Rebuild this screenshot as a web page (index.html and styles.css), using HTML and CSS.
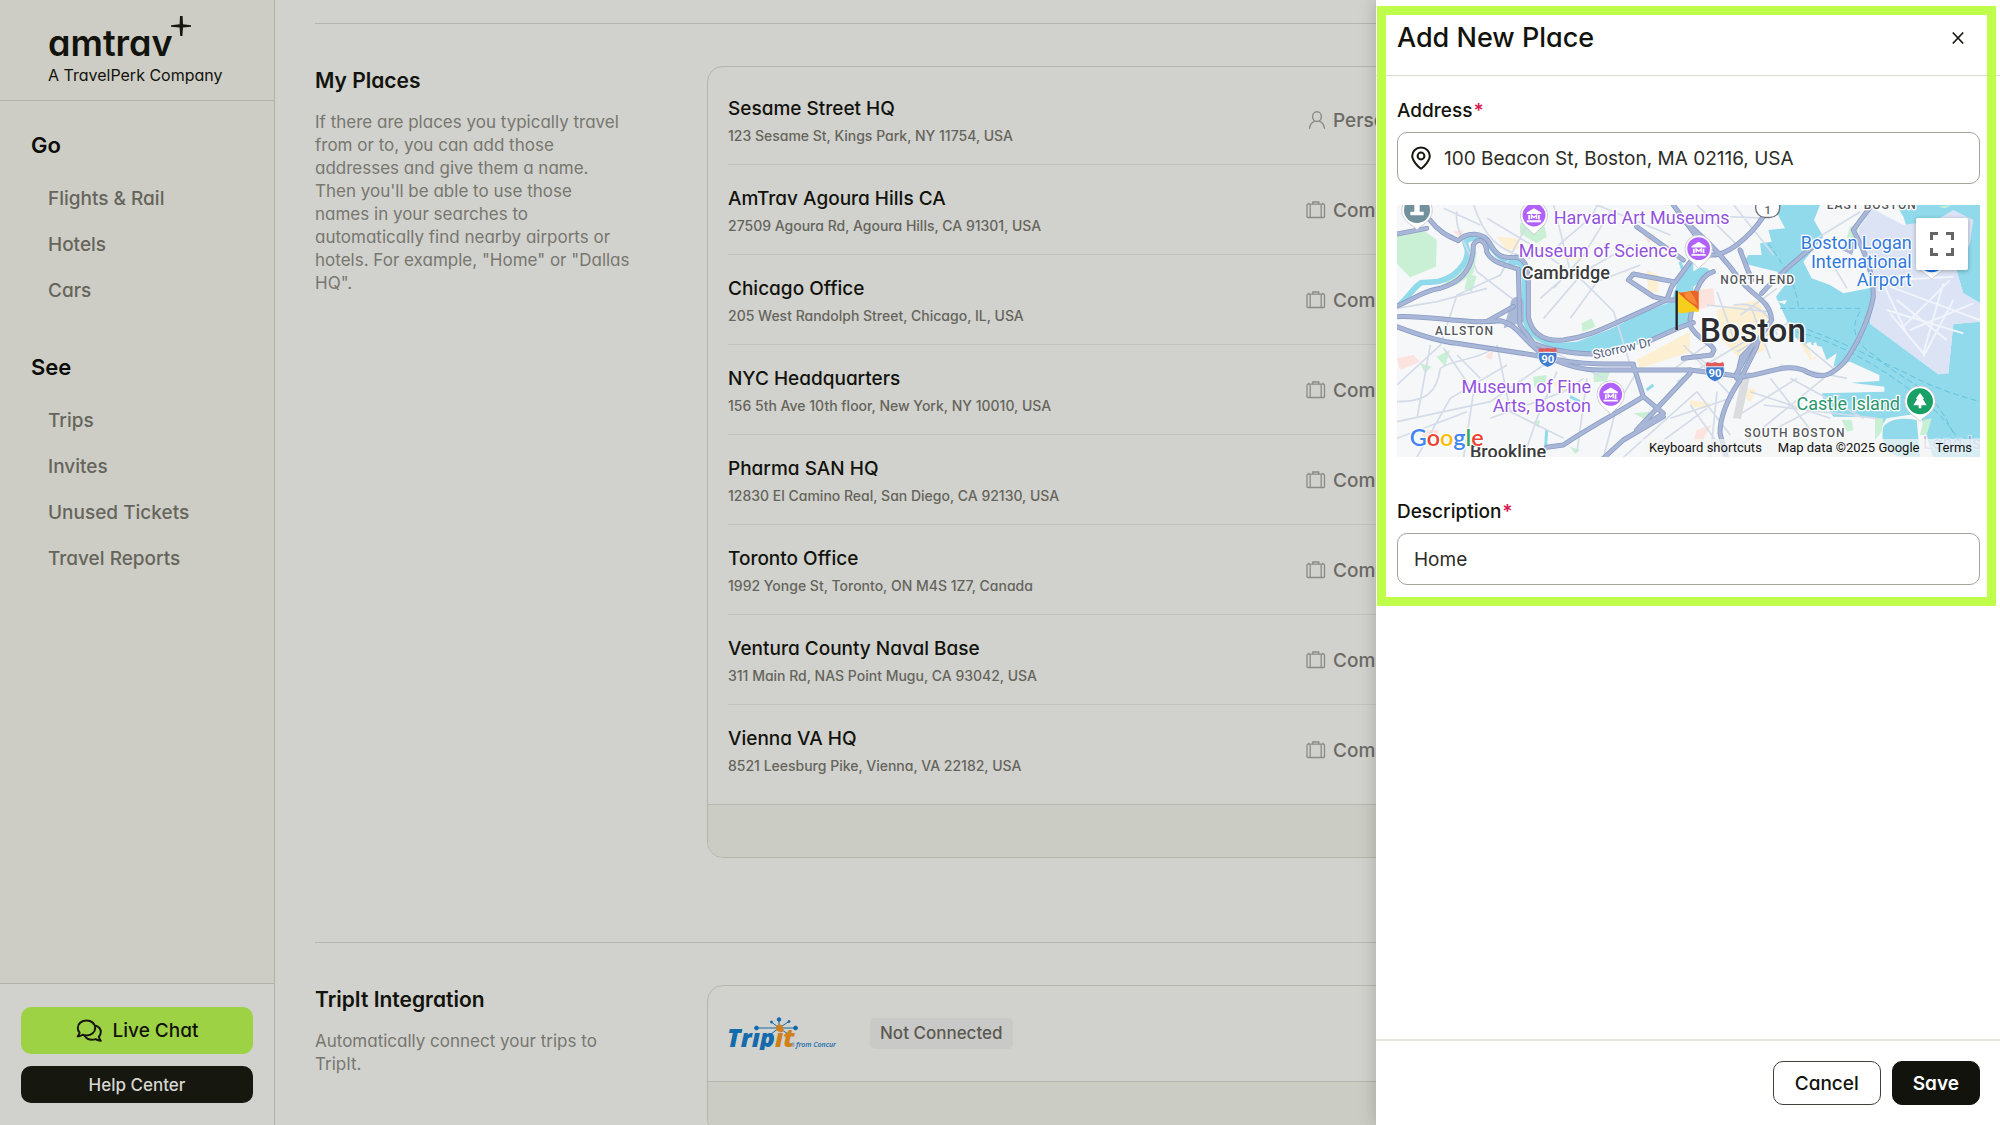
FILE: index.html
```html
<!DOCTYPE html>
<html lang="en">
<head>
<meta charset="utf-8">
<meta name="viewport" content="width=device-width, initial-scale=1">
<title>My Places - amtrav</title>
<link rel="stylesheet" href="styles.css">
</head>
<body>
<svg class="sprite" aria-hidden="true">
  <symbol id="suitcase" viewBox="0 0 20 18">
    <g fill="none" stroke="currentColor" stroke-width="1.3">
      <rect x="1" y="3.2" width="17.5" height="13.3" rx="1"/>
      <path d="M4.2 3.2v13.3M15.2 3.2v13.3M6.8 3.2V1h6v2.2M2.8 3V1.8M16.8 3V1.8"/>
    </g>
  </symbol>
  <symbol id="person" viewBox="0 0 20 18">
    <g fill="none" stroke="currentColor" stroke-width="1.4" stroke-linecap="round">
      <ellipse cx="11" cy="5.6" rx="4.4" ry="4.9"/>
      <path d="M3.6 17.2c.3-3.400 2-5.700 4.600-6.900M18.400 17.200c-.3-3.400-2-5.700-4.600-6.900"/>
    </g>
  </symbol>
  <symbol id="museum" viewBox="-40 -40 80 96">
    <path class="pin-base" d="M0 56C-8 42-38 32-38 0A38 38 0 0 1 38 0C38 32 8 42 0 56Z"/>
    <circle r="32" fill="#b161ff"/>
    <path d="M0-19-20-7v4h40v-4ZM-16 0h5v13h-5ZM11 0h5v13h-5ZM-20 15h40v5h-40Z" fill="#fff"/>
    <path d="M-7 11V1L0 7 7 1v10" fill="none" stroke="#fff" stroke-width="4"/>
  </symbol>
  <symbol id="interstate" viewBox="0 0 60 60">
    <path d="M4 16c-4 20 4 36 26 43 22-7 30-23 26-43Z" fill="#3d7bd0" stroke="#fff" stroke-width="2"/>
    <path d="M4 14c-1-4 0-8 3-12 7 4 15 3 23 0 8 3 16 4 23 0 3 4 4 8 3 12Z" fill="#e25a5a"/>
    <text x="30" y="46" text-anchor="middle" class="shield-text">90</text>
  </symbol>
</svg>

<div class="app">
  <aside class="sidebar">
    <header class="brand">
      <div class="brand-row">
        <span class="brand-name">amtrav</span>
        <svg class="brand-star" width="20" height="20" viewBox="0 0 20 20" aria-hidden="true"><path d="M9 0h2.600l.4 8.300 8 .9v1.600l-8 .7-.6 8.500H9.200l-.6-8.500-8.600-.7V9.200l8.600-.9Z" fill="#16170f"/></svg>
      </div>
      <p class="brand-sub">A TravelPerk Company</p>
    </header>
    <nav class="nav" aria-label="Main">
      <section>
        <h2 class="nav-title">Go</h2>
        <ul class="nav-list">
          <li><a href="#flights">Flights &amp; Rail</a></li>
          <li><a href="#hotels">Hotels</a></li>
          <li><a href="#cars">Cars</a></li>
        </ul>
      </section>
      <section>
        <h2 class="nav-title">See</h2>
        <ul class="nav-list">
          <li><a href="#trips">Trips</a></li>
          <li><a href="#invites">Invites</a></li>
          <li><a href="#tickets">Unused Tickets</a></li>
          <li><a href="#reports">Travel Reports</a></li>
        </ul>
      </section>
    </nav>
    <footer class="support">
      <button type="button" class="chat-btn">
        <svg width="26" height="24" viewBox="0 0 26 24" fill="none" stroke="#16170f" stroke-width="2" stroke-linejoin="round" stroke-linecap="round" aria-hidden="true">
          <path d="M10.500 1.500c5 0 8.700 3.200 8.700 7.400s-3.700 7.500-8.700 7.500c-1.400 0-2.700-.3-3.800-.7-1.400 1-3 1.600-5 1.700 1-1.100 1.700-2.400 1.900-3.700C2.500 12.400 1.800 10.700 1.800 8.900c0-4.200 3.700-7.400 8.700-7.400Z"/>
          <path d="M19.800 6.800c3 1 5 3.400 5 6.300 0 1.800-.7 3.400-1.900 4.700.2 1.400.9 2.800 1.900 4-2-.1-3.700-.7-5.100-1.700-1.100.4-2.300.6-3.600.6-3.200 0-5.900-1.400-7.300-3.700"/>
        </svg>
        <span>Live Chat</span>
      </button>
      <button type="button" class="help-btn">Help Center</button>
    </footer>
  </aside>

  <main class="content">
    <section class="block">
      <div class="intro">
        <h2>My Places</h2>
        <p>If there are places you typically travel from or to, you can add those addresses and give them a name. Then you'll be able to use those<br>names in your searches to automatically find nearby airports or hotels. For example, "Home" or "Dallas HQ".</p>
      </div>
      <div class="card">
        <ul class="places">
          <li><div class="place"><h3>Sesame Street HQ</h3><p>123 Sesame St, Kings Park, NY 11754, USA</p></div><div class="kind"><svg width="20" height="18" aria-hidden="true"><use href="#person"/></svg>Personal</div></li>
          <li><div class="place"><h3>AmTrav Agoura Hills CA</h3><p>27509 Agoura Rd, Agoura Hills, CA 91301, USA</p></div><div class="kind"><svg width="20" height="18" aria-hidden="true"><use href="#suitcase"/></svg>Company</div></li>
          <li><div class="place"><h3>Chicago Office</h3><p>205 West Randolph Street, Chicago, IL, USA</p></div><div class="kind"><svg width="20" height="18" aria-hidden="true"><use href="#suitcase"/></svg>Company</div></li>
          <li><div class="place"><h3>NYC Headquarters</h3><p>156 5th Ave 10th floor, New York, NY 10010, USA</p></div><div class="kind"><svg width="20" height="18" aria-hidden="true"><use href="#suitcase"/></svg>Company</div></li>
          <li><div class="place"><h3>Pharma SAN HQ</h3><p>12830 El Camino Real, San Diego, CA 92130, USA</p></div><div class="kind"><svg width="20" height="18" aria-hidden="true"><use href="#suitcase"/></svg>Company</div></li>
          <li><div class="place"><h3>Toronto Office</h3><p>1992 Yonge St, Toronto, ON M4S 1Z7, Canada</p></div><div class="kind"><svg width="20" height="18" aria-hidden="true"><use href="#suitcase"/></svg>Company</div></li>
          <li><div class="place"><h3>Ventura County Naval Base</h3><p>311 Main Rd, NAS Point Mugu, CA 93042, USA</p></div><div class="kind"><svg width="20" height="18" aria-hidden="true"><use href="#suitcase"/></svg>Company</div></li>
          <li><div class="place"><h3>Vienna VA HQ</h3><p>8521 Leesburg Pike, Vienna, VA 22182, USA</p></div><div class="kind"><svg width="20" height="18" aria-hidden="true"><use href="#suitcase"/></svg>Company</div></li>
        </ul>
        <div class="card-foot"></div>
      </div>
    </section>

    <section class="block">
      <div class="intro">
        <h2>TripIt Integration</h2>
        <p>Automatically connect your trips to TripIt.</p>
      </div>
      <div class="card">
        <div class="tripit">
          <svg class="tripit-logo" width="112" height="33" viewBox="0 0 112 33" role="img" aria-label="TripIt from Concur">
            <g stroke="#136bab" stroke-width="1" fill="#136bab">
              <path d="M28 11h42M51 11V3M51 11 43.500 5M51 11l10-6.500M51 11l-8 6M51 11l9 6" fill="none"/>
              <circle cx="51" cy="2.500" r="1.800"/><circle cx="28.500" cy="11" r="1.900"/><circle cx="67.500" cy="11" r="1.900"/>
              <circle cx="43.500" cy="5" r="1"/><circle cx="61" cy="4.500" r="1"/>
            </g>
            <text x="-1" y="30" class="tripit-word" fill="#136bab">Trıp<tspan fill="#cf8019">it</tspan></text>
            <circle cx="51.500" cy="11" r="3.500" fill="#cf8019"/>
            <text x="63" y="30" class="tripit-reg" fill="#5687a8">®</text>
            <text x="68" y="30" class="tripit-sub" fill="#136bab">from Concur</text>
          </svg>
          <span class="badge">Not Connected</span>
        </div>
        <div class="card-foot"></div>
      </div>
    </section>
  </main>
</div>

<aside class="drawer" role="dialog" aria-labelledby="drawer-title">
  <header class="drawer-head">
    <h1 id="drawer-title">Add New Place</h1>
    <button type="button" class="close" aria-label="Close"><svg width="12" height="14" viewBox="0 0 12 14" aria-hidden="true"><path d="M.8 1.500 11.200 12.500M11.200 1.500.8 12.500" stroke="#16170f" stroke-width="1.700" fill="none"/></svg></button>
  </header>
  <form class="form" id="place-form">
    <label for="address">Address<span class="req">*</span></label>
    <div class="field">
      <svg width="20" height="24" viewBox="0 0 20 24" fill="none" stroke="#16170f" stroke-width="2" aria-hidden="true"><path d="M10 1.500c5 0 8.800 3.600 8.800 8.500 0 3.600-2.700 7-5.800 10.200-1.100 1.100-2 1.900-3 2.400-1-.5-1.900-1.300-3-2.400C3.900 17 1.200 13.600 1.200 10 1.200 5.100 5 1.500 10 1.500Z"/><circle cx="10" cy="10" r="3.400"/></svg>
      <input id="address" type="text" value="100 Beacon St, Boston, MA 02116, USA">
    </div>
    <div class="map">
      <svg class="map-art" viewBox="0 0 1749 756" preserveAspectRatio="xMidYMid slice" role="img" aria-label="Map of Boston">
        <defs>
          <g id="highways" fill="none" stroke-linecap="round" stroke-linejoin="round">
            <g transform="translate(-21 -15)">
              <path d="M20 350C120 345 230 375 330 362 390 375 400 430 470 470 540 500 580 512 640 510H900"/>
              <path d="M20 380C100 410 150 425 200 430L430 465C500 480 550 490 640 492H730"/>
              <path d="M20 318C70 300 90 275 150 265 220 245 250 200 250 135 262 112 288 118 290 155 305 190 350 195 385 208L390 375 430 430C480 450 540 460 610 462"/>
              <path d="M120 60C150 100 180 110 205 122 230 95 280 95 300 130 320 170 340 175 380 172 410 180 415 210 415 250V350C425 400 460 425 520 420 600 410 650 380 720 350L830 300H900"/>
              <path d="M850 245 730 222 715 240 790 290 830 300 845 260 905 180"/>
              <path d="M780 422C830 400 870 380 910 368M730 495 760 590 820 640 740 690 900 520M760 590C680 640 600 680 520 735L470 742M640 775 700 720 820 650"/>
              <path d="M740 80 880 180M850 15 920 110M20 102 110 85M290 365 370 320"/>
            </g>
            <g transform="translate(879 -15)">
              <path d="M-20 60C60 130 100 170 150 240 190 290 240 300 245 360 220 400 200 420 200 440L150 540C110 600 90 650 90 700L110 775"/>
              <path d="M60 165C110 170 180 110 220 50M150 150 185 240M215 280C260 230 330 170 370 140"/>
              <path d="M545 15 490 90C510 130 550 200 550 290 540 350 500 440 460 490 420 530 390 540 340 510 280 490 240 520 160 530L0 510"/>
              <path d="M140 535 155 470 195 430M185 440 140 520M70 215C20 230 10 300 0 360M0 375C20 420 65 425 72 450L65 465-20 475"/>
            </g>
          </g>
        </defs>
        <rect width="1749" height="756" fill="#f6f7f8"/>
        <g transform="translate(-21 -15)">
          <path fill="#c9efd5" d="M20 105 100 90 140 120 138 200 60 232 20 190ZM390 70l70-10 10 50-30 20-50-30ZM235 220l25 10-15 45-22-8ZM575 370l30-15 12 25-40 15ZM140 470l40-20-15 50ZM430 530l40-5-2 30-35 5ZM610 520l50-5-10 28-38 4ZM90 490l35 10-20 20ZM430 665l20-5-5 25ZM730 640l50-5-10 25ZM150 260l90-80 10-40 10 20-10 60-50 35ZM410 350c10 40 30 60 70 80l-40-5-32-25ZM540 740l30 10-15 12ZM245 760l20-10 30 20h-30Z"/>
          <path fill="#fce3df" d="M20 475l50-10 20 20-60 25ZM190 95l30-5-10 25ZM285 470l25-20-5 30ZM95 690l50 0-3 25-45-5ZM755 95l40 10-20 25Z"/>
          <path fill="#fcefd2" d="M320 110l60 5 20 30-50 5ZM770 210l35 15v50l-30 5ZM740 480l160-85v60l-150 50ZM480 545l50 5 30 30-50-5ZM515 160l60 10v12l-55-5Z"/>
          <path fill="#90daec" d="M490 430 560 425 660 388 760 338 850 302 905 298V375L820 405 700 450 620 460 540 455 480 440ZM910 180 865 240 845 300H910Z"/>
          <path fill="none" stroke="#90daec" stroke-width="17" d="M20 322C60 290 70 260 95 248 130 245 150 250 190 225 220 200 235 175 232 150L225 125"/>
          <path fill="none" stroke="#90daec" stroke-width="17" d="M220 130C240 110 260 108 290 125 320 165 335 185 385 188 408 200 403 230 403 280V340C405 390 440 420 500 438"/>
          <path fill="none" stroke="#90daec" stroke-width="9" d="M540 590l30 15M465 770l5-80M770 570l20-15M870 185l10 30"/>
        </g>
        <g transform="translate(879 -15)">
          <path fill="#fce3df" d="M10 270l60-5 5 50-55 15ZM20 690l45-15-30 50H10Z"/>
          <path fill="#fcefd2" d="M80 330l120-30 45 60-20 90-70 30-60-60ZM150 560l50 10-20 40ZM0 600l60 10v15l-60-5ZM330 430l30 50 20-5-30-50Z"/>
          <path fill="#90daec" d="M270 15H390L372 60 400 110 340 185 365 235 420 255 460 280 552 262 540 370 745 523 775 520 790 372 872 365V775H730L690 640 590 655 560 700 555 652 430 650 400 600 396 580 583 575V560L483 548 568 543V525L480 485 430 500 440 460 410 480 395 440 340 430 300 400 290 360 258 290 285 255 262 215 200 200 160 190 175 165 215 165 210 130 245 125 235 90 285 85 262 40ZM0 225c20-25 50-30 60-10-20 30-40 40-60 50ZM620 15H872V310L820 280 800 215 680 170 640 50Z"/>
          <path fill="#dbe3f5" d="M545 25 640 75 740 60 790 30 850 60 840 130 800 210 820 280 872 310V365L790 372 775 520 745 523 540 372 555 270 520 180 505 90Z"/>
          <path fill="#f6f7f8" d="M350 430l12-5 14 45-10 5ZM370 430l8-4 14 44-8 5ZM290 300l-30 5 25 8ZM595 655c50-5 90-5 100 5l15 110H580l-20-60Z"/>
          <path fill="#c9efd5" d="M555 655l25 0-5 40-20 25ZM700 660l25-5-15 50-20 0ZM455 660l30 0 5 30-20 5ZM480 80l30-10-15 50-25-5ZM745 20l40-5-20 10Z"/>
          <path fill="#90daec" d="M580 680c20-25 60-28 100-20l10 110h-60c-40-10-60-40-50-90Z"/>
          <path fill="none" stroke="#f1f4fb" stroke-width="6" d="M590 330 820 400M600 260 870 360M640 380 780 240M600 340 700 460 760 250M620 300 770 420M570 230 650 400M700 470 790 300M660 390 850 310M610 240 790 230"/>
          <path fill="none" stroke="#63c3dc" stroke-width="3" stroke-dasharray="18 10" d="M235 130C270 180 320 250 325 320M270 325H510M300 370C450 420 560 480 650 520 740 570 820 590 870 605M320 395C460 430 600 520 700 600 770 660 800 700 830 770M510 335C480 380 490 430 560 470 620 540 720 540 790 700"/>
        </g>
        <g fill="none" stroke="#d3dce8" stroke-width="5">
          <path d="M0 590C90 590 120 560 130 490 170 460 230 470 290 430M180 20C170 70 210 120 240 200L370 300M0 540 130 420 180 270 310 210 400 40M230 0C260 90 300 140 400 160M270 40 420 130 560 230 650 320 700 480M450 160C500 90 580 60 600 0M440 340 560 200 700 120M470 0 520 200 430 280M0 650 280 590 440 480M60 756 160 580 330 480M200 756 230 560 140 430M280 640 500 560 560 520M380 756 420 640 480 500M100 420 60 640M540 740 570 520M620 756 660 600 720 500M0 700 210 620M300 420 340 620 500 700M640 20 560 150 470 250M730 180 600 230 520 340M600 0 820 90M680 756 900 560M250 60 140 10M270 250 120 290 0 310M180 450 250 520M430 420 620 520"/>
          <path d="M820 500 1010 360M840 530 1060 400M880 440 960 500M860 420 1010 580M930 300 1110 320M960 260 1010 400M1010 640 1200 520M1060 560 1300 640M1080 700 1330 570M1120 520 1260 700M1180 520 1400 640M1010 740 1280 520M1150 480 1350 520M1200 400 1320 500M880 600 980 740M820 640 1000 580M900 0 1040 140M1010 0 1130 150M870 30 1120 40M940 756 960 560M1260 100 1390 20M1290 150 1350 250M1100 600 1440 640M900 560 1000 690M780 720 930 610"/>
          <path d="M1010 300c60-10 110 20 130 90M1020 440l160-90M1060 300l60 160M1140 250l-110 80"/>
        </g>
        <path d="M1020 640 1050 500" stroke="#dadce0" stroke-width="24" fill="none"/>
        <path d="M340 300c0-25 30-35 40-10v60l-60 20ZM1385 90l-60 40 40 20Z" fill="#a9b8d6"/>
        <use href="#highways" stroke="#8c9dc4" stroke-width="15"/>
        <use href="#highways" stroke="#a8b7d8" stroke-width="10"/>
        <g transform="translate(-21 -15)">
          <g transform="translate(81 30)"><path class="pin-base" d="M0 60C-8 46-46 36-46 0A46 46 0 0 1 46 0C46 36 8 46 0 60Z"/><circle r="39" fill="#71919c"/><path d="M-8-15H8V5h12v11h-40V5h12Z" fill="#fff"/></g>
          <use href="#museum" x="389" y="2" width="86" height="103"/>
          <use href="#museum" x="619" y="540" width="86" height="103"/>
          <use href="#interstate" x="442" y="441" width="62" height="62"/>
          <text class="poi" x="491" y="71">Harvard Art Museums</text>
          <text class="poi" x="386" y="171">Museum of Science</text>
          <text class="poi" x="603" y="580" text-anchor="end">Museum of Fine</text>
          <text class="poi" x="603" y="635" text-anchor="end">Arts, Boston</text>
          <text class="town" x="395" y="238">Cambridge</text>
          <text class="town" x="240" y="775">Brookline</text>
          <text class="area" x="135" y="404">ALLSTON</text>
          <text class="road" x="612" y="478" transform="rotate(-13 612 478)">Storrow Dr</text>
        </g>
        <g transform="translate(879 -15)">
          <use href="#museum" x="-17" y="103" width="86" height="103"/>
          <use href="#interstate" x="44" y="484" width="62" height="62"/>
          <rect x="197" y="-8" width="72" height="60" rx="28" fill="#fff" stroke="#6d7074" stroke-width="4"/>
          <text x="233" y="41" text-anchor="middle" class="route">1</text>
          <g transform="translate(725 178)"><path class="pin-base" d="M0 60C-8 46-46 36-46 0A46 46 0 0 1 46 0C46 36 8 46 0 60Z"/><circle r="39" fill="#1a73e8"/></g>
          <g transform="translate(690 604)"><path class="pin-base" d="M0 60C-8 46-46 36-46 0A46 46 0 0 1 46 0C46 36 8 46 0 60Z"/><circle r="39" fill="#18a066"/><path d="M0-25 13-8H8L20 12H4v9h-8v-9h-16L-8-8h-5Z" fill="#fff"/></g>
          <g transform="translate(-40 272)">
            <path d="M0 0v118" stroke="#222" stroke-width="7"/>
            <path d="M4 3C24 12 44-6 66 3v62C44 56 24 74 4 65Z" fill="#f7ce1d"/>
            <path d="M4 3C24 12 44-6 66 3v56C50 40 20 25 4 3Z" fill="#e8622a"/>
            <path d="M22 9c6 16 18 26 40 34-6-20-14-32-22-42Z" fill="#f58b35"/>
          </g>
          <text class="area" x="410" y="26">EAST BOSTON</text>
          <text class="area" x="91" y="253">NORTH END</text>
          <text class="area" x="163" y="712">SOUTH BOSTON</text>
          <text class="city" x="29" y="427">Boston</text>
          <text class="poi blue" x="665" y="148" text-anchor="end">Boston Logan</text>
          <text class="poi blue" x="665" y="203" text-anchor="end">International</text>
          <text class="poi blue" x="665" y="258" text-anchor="end">Airport</text>
          <text class="poi green" x="630" y="630" text-anchor="end">Castle Island</text>
          <text class="poi faint" x="698" y="748">Long Island</text>
        </g>
        <text class="google" x="38" y="722"><tspan fill="#4285f4">G</tspan><tspan fill="#ea4335">o</tspan><tspan fill="#fbbc04">o</tspan><tspan fill="#4285f4">g</tspan><tspan fill="#34a853">l</tspan><tspan fill="#ea4335">e</tspan></text>
      </svg>
      <button type="button" class="fullscreen" aria-label="Toggle fullscreen view"><svg width="24" height="24" viewBox="0 0 24 24" fill="none" stroke="#666" stroke-width="3" aria-hidden="true"><path d="M1.500 8V1.500H8M16 1.500h6.500V8M22.500 16v6.500H16M8 22.500H1.500V16"/></svg></button>
      <div class="attribution">
        <button type="button">Keyboard shortcuts</button>
        <span>Map data ©2025 Google</span>
        <a href="#terms">Terms</a>
      </div>
    </div>
    <label for="description">Description<span class="req">*</span></label>
    <div class="field">
      <input id="description" type="text" value="Home">
    </div>
  </form>
  <footer class="drawer-foot">
    <button type="button" class="btn">Cancel</button>
    <button type="submit" form="place-form" class="btn btn-dark">Save</button>
  </footer>
  <div class="highlight" aria-hidden="true"></div>
</aside>
</body>
</html>
```
FILE: styles.css
```css
* { box-sizing: border-box; }

body {
  margin: 0;
  height: 100vh;
  overflow: hidden;
  background: #d1d1ce;
  color: #12130c;
  font-family: "Inter", "Liberation Sans", sans-serif;
  font-feature-settings: "cv11";
  font-size: 19px;
}

h1, h2, h3, p, ul { margin: 0; padding: 0; font-weight: 500; }
ul { list-style: none; }
a { color: inherit; text-decoration: none; }
button, input { font: inherit; font-feature-settings: inherit; color: inherit; }
button { cursor: pointer; border: 0; padding: 0; }
svg { display: block; flex: none; }
.sprite { position: absolute; width: 0; height: 0; }

/* Page shell */
.app {
  display: grid;
  grid-template-columns: 275px minmax(0, 1fr);
  height: 100vh;
}

/* Sidebar */
.sidebar {
  display: flex;
  flex-direction: column;
  background: #cdcdc6;
  border-right: 1px solid #b2b2a8;
}
.brand {
  padding: 16px 20px 17px 48px;
  border-bottom: 1px solid #b2b2a8;
}
.brand-row { display: flex; align-items: flex-start; }
.brand-name {
  padding-top: 3px;
  font-size: 36px;
  font-weight: 600;
  line-height: 48px;
}
.brand-star { margin-left: -2px; }
.brand-sub {
  font-size: 16px;
  font-weight: 400;
  line-height: 16px;
}
.nav {
  display: flex;
  flex: 1;
  flex-direction: column;
  gap: 39px;
  padding-top: 30px;
}
.nav-title {
  padding-left: 31px;
  margin-bottom: 17px;
  font-size: 22px;
  font-weight: 600;
  line-height: 28px;
  color: #0b0b08;
}
.nav-list a {
  display: block;
  padding-left: 48px;
  line-height: 46px;
  color: #65655b;
}
.support {
  display: flex;
  flex-direction: column;
  gap: 12px;
  padding: 23px 21px 22px 21px;
  background: #d1d1ce;
  border-top: 1px solid #b2b2a8;
}
.chat-btn, .help-btn {
  display: flex;
  align-items: center;
  justify-content: center;
  border-radius: 10px;
  font-weight: 500;
}
.chat-btn { gap: 11px; height: 47px; background: #9ed245; }
.help-btn { height: 37px; background: #16170f; color: #d6d6d2; font-size: 17px; }

/* Main column */
.content { padding: 23px 40px 0 40px; overflow: hidden; }
.block {
  display: grid;
  grid-template-columns: 318px minmax(0, 1fr);
  column-gap: 74px;
  padding: 42px 0 84px;
  border-top: 1px solid #b5b5b1;
}
.intro h2 { font-size: 21px; font-weight: 600; line-height: 30px; }
.intro p {
  margin-top: 15px;
  font-size: 17px;
  font-weight: 400;
  line-height: 23px;
  color: #77776e;
}
.card {
  border: 1px solid #b5b6ab;
  border-radius: 16px;
  overflow: hidden;
}
.card-foot {
  height: 53px;
  background: #cbccc4;
  border-top: 1px solid #b5b5b1;
}
.places { padding: 8px 20px 9px; }
.places li {
  display: grid;
  grid-template-columns: 578px minmax(0, 1fr);
  align-items: center;
  height: 90px;
  border-bottom: 1px solid #c3c3c0;
}
.places li:last-child { border-bottom-color: transparent; }
.place { display: grid; gap: 4px; padding-top: 2px; }
.place h3 { font-size: 19px; line-height: 26px; }
.place p { font-size: 14px; line-height: 20px; color: #65655b; }
.kind {
  display: flex;
  align-items: center;
  gap: 7px;
  padding-top: 1px;
  color: #6b6b64;
}
.kind svg { color: #8b8b86; }
.tripit {
  display: flex;
  align-items: center;
  gap: 30px;
  padding: 31px 20px;
}
.tripit-word { font: italic 900 25px "Open Sans", "Lato", sans-serif; }
.tripit-reg { font: 5px "Open Sans", sans-serif; }
.tripit-sub { font: italic 600 7px "Open Sans", sans-serif; }
.badge {
  padding: 0 10px;
  border-radius: 5px;
  background: #c9c9c7;
  color: #5b5952;
  font-size: 17px;
  font-weight: 500;
  line-height: 31px;
}

/* Drawer */
.drawer {
  position: absolute;
  top: 0;
  right: 0;
  display: flex;
  flex-direction: column;
  width: 624px;
  height: 100vh;
  background: #fff;
  box-shadow: 0 0 16px rgba(22, 23, 15, 0.22);
}
.drawer-head {
  display: flex;
  align-items: center;
  justify-content: space-between;
  height: 76px;
  padding: 1px 36px 0 21px;
  border-bottom: 1px solid #dadbd3;
}
.drawer-head h1 { font-size: 27px; line-height: 36px; }
.close { background: none; }
.form {
  display: flex;
  flex: 1;
  flex-direction: column;
  gap: 7px;
  padding: 21px 20px 0 21px;
}
.form label { font-weight: 500; line-height: 28px; }
.req { margin-left: 1px; color: #d81a52; font-weight: 600; }
.field {
  display: flex;
  align-items: center;
  gap: 10px;
  height: 52px;
  padding: 0 13px;
  border: 1px solid #a3a498;
  border-radius: 10px;
}
.field input {
  flex: 1;
  min-width: 0;
  padding: 0 3px;
  border: 0;
  outline: 0;
  background: none;
  color: #2b2c26;
}
.drawer-foot {
  display: flex;
  justify-content: flex-end;
  gap: 11px;
  padding: 20px;
  border-top: 2px solid #e6e6df;
}
.btn {
  height: 44px;
  padding: 0 21px;
  background: #fff;
  border: 1px solid #3f4039;
  border-radius: 10px;
  font-weight: 500;
}
.btn-dark { padding: 0 20px; background: #12130c; border-color: #12130c; color: #fff; font-weight: 600; }
.highlight {
  position: absolute;
  top: 6px;
  left: 1px;
  right: 4px;
  height: 600px;
  border: 9px solid #bfff4c;
  pointer-events: none;
}

/* Map */
.map {
  position: relative;
  height: 252px;
  margin: 14px 0 34px;
  overflow: hidden;
  font-family: "Roboto", sans-serif;
}
.map-art { width: 100%; height: 100%; }
.map text { paint-order: stroke; stroke: #fff; stroke-width: 8px; stroke-linejoin: round; font-family: "Roboto", sans-serif; }
.pin-base { fill: #fff; stroke: #b9bcc4; stroke-width: 2px; }
.poi { font-size: 54px; fill: #9152dd; }
.map .blue { fill: #2f78dc; }
.map .green { fill: #2b9670; }
.map .faint { opacity: 0.4; }
.town { font-size: 54px; font-weight: 500; fill: #3a3b3d; }
.city { font-size: 101px; font-weight: 500; fill: #2b2d30; }
.area { font-size: 36px; font-weight: 500; letter-spacing: 3px; fill: #55585c; }
.road { font-size: 38px; fill: #54617c; }
.shield-text { font: 700 33px "Roboto", sans-serif; fill: #fff; }
.map .shield-text, .map .route { stroke: none; }
.route { font-size: 34px; font-weight: 500; fill: #5b5e62; }
.map .google { font: 600 70px "Lato", sans-serif; }
.fullscreen {
  position: absolute;
  top: 13px;
  right: 12px;
  display: grid;
  place-items: center;
  width: 52px;
  height: 52px;
  border-radius: 2px;
  background: #fff;
  box-shadow: 0 1px 4px rgba(0, 0, 0, 0.3);
}
.attribution {
  position: absolute;
  right: 0;
  bottom: 0;
  display: flex;
  gap: 16px;
  padding: 0 8px;
  background: rgba(245, 245, 245, 0.7);
  color: #111;
  font-size: 13px;
  line-height: 18px;
}
.attribution button { background: none; }
```
